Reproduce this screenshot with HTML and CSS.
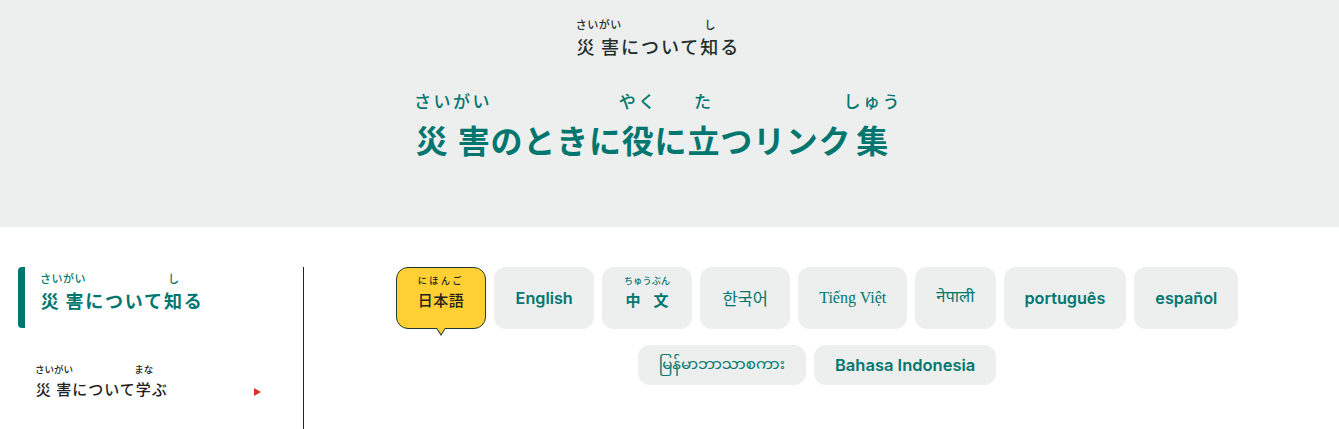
FILE: index.html
```html
<!DOCTYPE html>
<html lang="ja">
<head>
<meta charset="utf-8">
<title>災害のときに役に立つリンク集</title>
<link rel="stylesheet" href="styles.css">
</head>
<body>
<header class="hero">
  <p class="crumb"><ruby><span class="gap">災</span>害<rt><span>さいがい</span></rt></ruby>について<ruby>知<rt><span>し</span></rt></ruby>る</p>
  <h1 class="title"><ruby><span class="gap">災</span>害<rt><span>さいがい</span></rt></ruby>のときに<ruby>役<rt><span>やく</span></rt></ruby>に<ruby>立<rt><span>た</span></rt></ruby>つリンク<ruby>集<rt><span>しゅう</span></rt></ruby></h1>
</header>
<div class="content">
  <nav class="side">
    <a class="side-item active"><span><ruby><span class="gap">災</span>害<rt><span>さいがい</span></rt></ruby>について<ruby>知<rt><span>し</span></rt></ruby>る</span></a>
    <a class="side-item sub"><span><ruby><span class="gap">災</span>害<rt><span>さいがい</span></rt></ruby>について<ruby>学<rt><span>まな</span></rt></ruby>ぶ</span><i class="arrow"></i></a>
  </nav>
  <main class="langs">
    <div class="row">
      <a class="lang current"><ruby>日本語<rt><span>にほんご</span></rt></ruby></a>
      <a class="lang en">English</a>
      <a class="lang wide cjk"><ruby><span class="gap">中</span>文<rt><span>ちゅうぶん</span></rt></ruby></a>
      <a class="lang wide native kr">한국어</a>
      <a class="lang native vi">Tiếng Việt</a>
      <a class="lang native ne">नेपाली</a>
      <a class="lang">português</a>
      <a class="lang">español</a>
    </div>
    <div class="row">
      <a class="lang short native my">မြန်မာဘာသာစကား</a>
      <a class="lang short id">Bahasa Indonesia</a>
    </div>
  </main>
</div>
</body>
</html>
```
FILE: styles.css
```css
* { box-sizing: border-box; }
html, body { margin: 0; padding: 0; }
body {
  height: 429px;
  overflow: hidden;
  background: #fff;
  color: #222;
  font-family: "Noto Sans CJK JP", "Noto Sans", sans-serif;
}
rt { font-weight: 500; line-height: 1; white-space: nowrap; }
rt > span { display: inline-block; white-space: nowrap; }
.gap { letter-spacing: 5px; }
.hero {
  height: 227px;
  background: #ecefee;
  text-align: center;
  padding: 16px 23px 0 0;
}
.crumb {
  margin: 0;
  font-size: 18px;
  line-height: 24px;
  font-weight: 500;
  color: #1f2d2b;
  letter-spacing: 2px;
}
.crumb rt { font-size: 11px; letter-spacing: 0.5px; }
.crumb rt > span { padding-bottom: 8px; }
.title {
  margin: 30px 0 0;
  font-size: 32px;
  line-height: 46px;
  font-weight: 700;
  color: #00766f;
  letter-spacing: 0.8px;
}
.title .gap { letter-spacing: 7px; }
.title rt { font-size: 17px; letter-spacing: 2.5px; }
.title rt > span { padding-bottom: 15px; }
.content {
  display: flex;
  height: 202px;
  padding-top: 40px;
}
.side {
  width: 286px;
  margin-left: 18px;
  border-right: 1px solid #222;
  display: flex;
  flex-direction: column;
}
.side-item {
  display: flex;
  justify-content: space-between;
  white-space: nowrap;
}
.active {
  height: 61px;
  border-left: 7px solid #00766f;
  border-radius: 4px;
  padding: 0 0 16px 15px;
  font-size: 18px;
  font-weight: 700;
  color: #00766f;
  line-height: 24px;
  letter-spacing: 1.8px;
  align-items: flex-end;
}
.active rt { font-size: 11px; letter-spacing: 0.5px; }
.active rt > span { padding-bottom: 8px; }
.sub {
  margin-top: 34px;
  padding: 0 42px 0 17px;
  font-size: 15px;
  font-weight: 500;
  line-height: 22px;
  letter-spacing: 1px;
  color: #222;
  align-items: flex-end;
}
.sub .gap { letter-spacing: 4px; }
.sub rt { font-size: 9.5px; letter-spacing: 0; }
.sub rt > span { padding-bottom: 6px; }
.arrow {
  width: 0;
  height: 0;
  margin-bottom: 4px;
  border-left: 7px solid #d0352b;
  border-top: 4px solid transparent;
  border-bottom: 4px solid transparent;
}
.langs {
  width: 1026px;
  display: flex;
  flex-direction: column;
  gap: 16px;
}
.row {
  display: flex;
  justify-content: center;
  gap: 8px;
}
.lang {
  position: relative;
  height: 62px;
  padding: 0 21px;
  display: flex;
  align-items: center;
  justify-content: center;
  background: #ecefee;
  border-radius: 12px;
  color: #00766f;
  font-family: "Inter", "Noto Sans", sans-serif;
  font-size: 16.2px;
  font-weight: 600;
}
.wide, .current { min-width: 90px; }
.en { min-width: 100px; }
.lang.short { height: 40px; }
.lang.id { font-size: 16.5px; }
.lang.current, .lang.cjk { padding-bottom: 12px; }
.lang ruby {
  font-family: "Noto Sans CJK JP", sans-serif;
  font-size: 15px;
  font-weight: 500;
  letter-spacing: 0.5px;
}
.lang rt { font-size: 9px; letter-spacing: 2.6px; }
.lang rt > span { padding-bottom: 7px; }
.lang.cjk ruby { font-weight: 700; }
.lang.cjk .gap { letter-spacing: 10px; }
.lang.cjk rt { letter-spacing: 0.3px; }
.lang.current {
  background: #ffd033;
  border: 1px solid #1f3b33;
  color: #222;
}
.lang.current::before,
.lang.current::after {
  content: "";
  position: absolute;
  border-style: solid;
  border-color: transparent;
  border-bottom-width: 0;
}
.lang.current::before {
  left: 39px;
  bottom: -8px;
  border-width: 8px 5px 0;
  border-top-color: #1f3b33;
}
.lang.current::after {
  left: 40px;
  bottom: -6px;
  border-width: 6px 4px 0;
  border-top-color: #ffd033;
}
.native { font-weight: 400; font-family: "Noto Sans CJK KR", "Noto Sans", sans-serif; }
.kr { font-size: 16.5px; }
.vi { font-family: "Liberation Serif", serif; font-size: 16px; }
.ne { font-family: "Noto Sans Devanagari", "Noto Sans", serif; font-size: 16.5px; }
.my { font-family: "Noto Sans Myanmar", "Noto Sans", sans-serif; font-size: 15.1px; }
```
